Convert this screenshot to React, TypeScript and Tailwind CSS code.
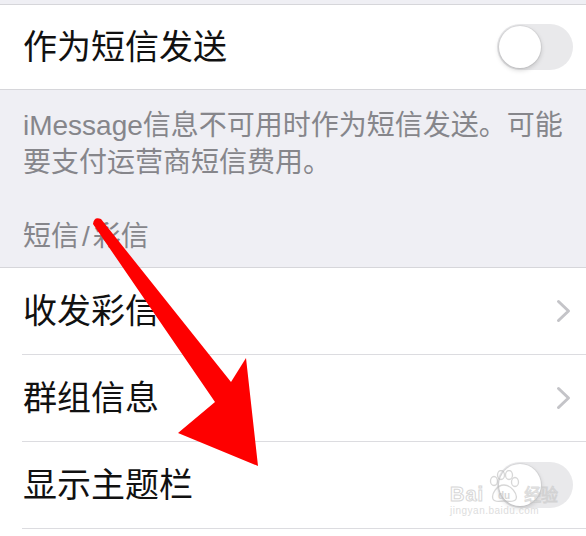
import React from "react";

const font = { fontFamily: '"Liberation Sans", "Noto Sans CJK SC", sans-serif' };

const Toggle = () => (
  <div className="relative h-[46px] w-[76px] rounded-full bg-[#e9e9eb]">
    <div className="absolute left-[2px] top-[2px] h-[42px] w-[42px] rounded-full bg-white shadow-[0_2px_5px_rgba(0,0,0,0.18),0_0_0_1px_rgba(0,0,0,0.05)]" />
  </div>
);

const Chevron = () => (
  <svg width="15" height="24" viewBox="0 0 15 24" className="mr-[2px]">
    <polyline points="2.5,2.5 12.5,12 2.5,21.5" fill="none" stroke="#c4c4c8" strokeWidth="3" strokeLinecap="round" strokeLinejoin="round" />
  </svg>
);

const Row = ({ label, right }: { label: string; right: React.ReactNode }) => (
  <div className="ml-[22px] flex h-[87px] items-center justify-between border-b border-[#dcdce0] pl-[1px] pr-[13px]">
    <span className="text-[34px] leading-none text-[#111]">{label}</span>
    {right}
  </div>
);

const Watermark = () => (
  <div className="pointer-events-none absolute left-[450px] top-[470px] flex flex-col items-start opacity-60">
    <div className="flex items-end">
      <span
        className="text-[20px] font-bold leading-none tracking-[1px] text-white"
        style={{ WebkitTextStroke: "1px #bdbdbd" }}
      >
        Bai
      </span>
      <svg width="38" height="34" viewBox="0 0 38 34" className="mx-[1px]">
        <g fill="none" stroke="#bdbdbd" strokeWidth="1.3">
          <ellipse cx="9" cy="11" rx="3.5" ry="4.5" />
          <ellipse cx="16" cy="5" rx="3.5" ry="4.5" />
          <ellipse cx="24" cy="5" rx="3.5" ry="4.5" />
          <ellipse cx="30" cy="12" rx="3.5" ry="4.5" />
          <path d="M19 15 C12 15 6 24 8 29 C10 33 15 31 19 31 C23 31 29 33 31 29 C33 24 26 15 19 15 Z" />
        </g>
        <text x="13" y="29" fontSize="10" fill="#bdbdbd" fontFamily="Liberation Sans, sans-serif" fontWeight="bold">
          du
        </text>
      </svg>
      <span
        className="text-[17px] leading-none text-white"
        style={{ WebkitTextStroke: "1px #c4c4c4" }}
      >
        经验
      </span>
    </div>
    <span className="mt-[2px] text-[10px] leading-none tracking-[0.5px] text-[#c8c8c8]">jingyan.baidu.com</span>
  </div>
);

const Arrow = () => (
  <svg className="pointer-events-none absolute left-0 top-0" width="586" height="536" viewBox="0 0 586 536">
    <path
      d="M93 224 Q94 216 101 219 L231 382 L246 358 L258 466 L178 433 L215 402 Z"
      fill="#fe0000"
    />
  </svg>
);

export default function App() {
  return (
    <div className="relative h-[536px] w-[586px] overflow-hidden bg-[#efeff4]" style={font}>
      <div className="h-[4px]" />
      <div className="flex h-[86px] items-center justify-between border-y border-[#d6d6da] bg-white pl-[23px] pr-[13px]">
        <span className="text-[34px] leading-none text-[#111]">作为短信发送</span>
        <Toggle />
      </div>

      <div className="pb-[12px] pl-[23px] pr-[14px] pt-[17px] text-[28px] leading-[37px] text-[#86868b]">
        <p>iMessage信息不可用时作为短信发送。可能要支付运营商短信费用。</p>
        <p className="mt-[37px]">
          短信<span className="mx-[3px]">/</span>彩信
        </p>
      </div>

      <div className="border-t border-[#d6d6da] bg-white pb-[10px]">
        <Row label="收发彩信" right={<Chevron />} />
        <Row label="群组信息" right={<Chevron />} />
        <Row label="显示主题栏" right={<Toggle />} />
      </div>

      <Arrow />
      <Watermark />
    </div>
  );
}
